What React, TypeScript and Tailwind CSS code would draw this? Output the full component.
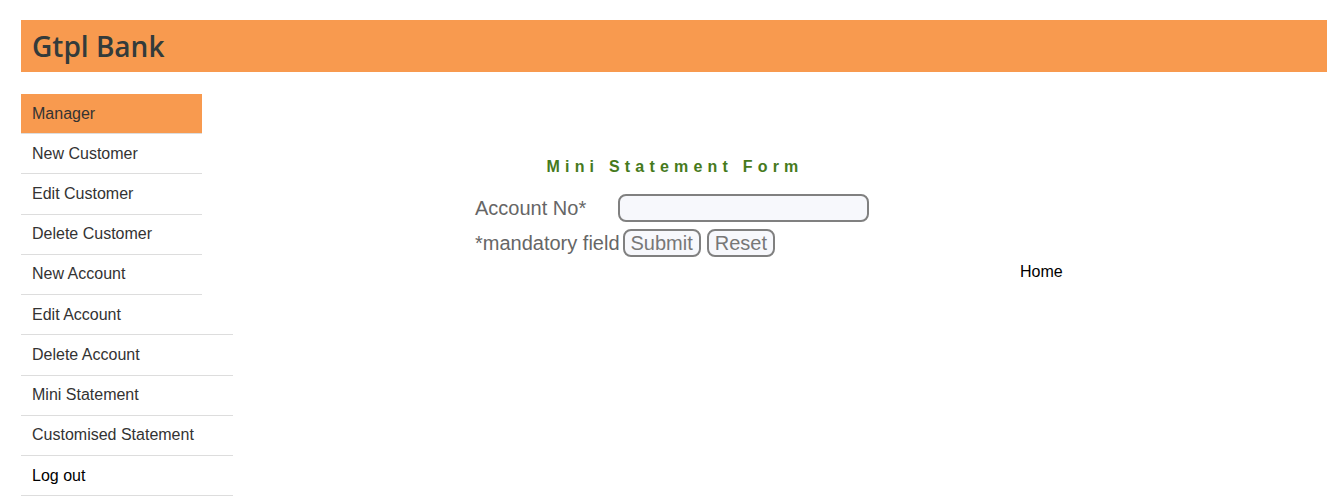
const MENU = [
  { label: "New Customer", wide: false },
  { label: "Edit Customer", wide: false },
  { label: "Delete Customer", wide: false },
  { label: "New Account", wide: false },
  { label: "Edit Account", wide: true },
  { label: "Delete Account", wide: true },
  { label: "Mini Statement", wide: true },
  { label: "Customised Statement", wide: true },
];

export default function App() {
  return (
    <div className="min-h-[500px] bg-white pt-[20px] font-['Liberation_Sans',Arial,sans-serif]">
      {/* Header */}
      <div className="ml-[21px] flex h-[52px] items-center bg-[#f89a4f] pl-[11px]">
        <h1 className="font-['Open_Sans',sans-serif] text-[28px] font-semibold leading-none text-[#333b3b]">Gtpl Bank</h1>
      </div>

      <div className="flex">
        {/* Sidebar */}
        <div className="ml-[21px] mt-[22px] w-[212px] shrink-0">
          <div className="box-border flex h-[40px] w-[181px] items-center border-b border-[#dddddd] bg-[#f89a4f] pl-[11px] text-[16px] text-[#333]">
            Manager
          </div>
          {MENU.map((item) => (
            <div
              key={item.label}
              className={`box-border flex h-[40.25px] items-center border-b border-[#dddddd] pl-[11px] text-[16px] text-[#333] ${
                item.wide ? "w-[212px]" : "w-[181px]"
              }`}
            >
              {item.label}
            </div>
          ))}
          <div className="box-border flex h-[40.25px] w-[212px] items-center border-b border-[#dddddd] pl-[11px] text-[16px] text-black">
            Log out
          </div>
        </div>

        {/* Main */}
        <div className="flex-1 pt-[85px]">
          <div className="ml-[242px] w-[400px]">
            <h2 className="text-center text-[16px] font-bold leading-[20px] tracking-[5.2px] text-[#467a1c]">
              Mini Statement Form
            </h2>
            <div className="mt-[17px] flex items-center">
              <span className="w-[143px] text-[20px] leading-[27px] text-[#666]">Account No*</span>
              <input
                type="text"
                className="box-border h-[28px] w-[251px] rounded-[8px] border-2 border-[#808080] bg-[#f7f8fc] outline-none"
              />
            </div>
            <div className="mt-[7px] flex items-center">
              <span className="text-[20px] leading-[27px] text-[#666]">*mandatory field</span>
              <button className="ml-[3px] box-border h-[28px] rounded-[8px] border-2 border-[#808080] bg-[#f7f8fc] px-[6px] text-[20px] leading-none text-[#777]">
                Submit
              </button>
              <button className="ml-[6px] box-border h-[28px] rounded-[8px] border-2 border-[#808080] bg-[#f7f8fc] px-[6px] text-[20px] leading-none text-[#777]">
                Reset
              </button>
            </div>
          </div>
          <div className="ml-[787px] mt-[6px] text-[16px] leading-[18px] text-black">Home</div>
        </div>
      </div>
    </div>
  );
}
